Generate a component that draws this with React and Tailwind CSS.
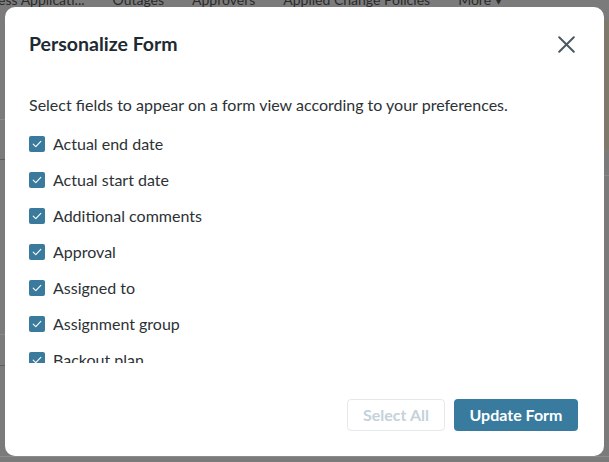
import React from "react";

const fields = [
  "Actual end date",
  "Actual start date",
  "Additional comments",
  "Approval",
  "Assigned to",
  "Assignment group",
  "Backout plan",
  "Business service",
];

const tabs = ["ess Applicati...", "Outages", "Approvers", "Applied Change Policies", "More ▾"];

function Check() {
  return (
    <span className="w-[16px] h-[16px] rounded-[2px] bg-[#3a7a9c] flex items-center justify-center shrink-0">
      <svg width="10" height="8" viewBox="0 0 10 8" fill="none">
        <path d="M1.2 4.2 L3.8 6.6 L8.8 1.4" stroke="white" strokeWidth="1.1" strokeLinecap="round" strokeLinejoin="round" />
      </svg>
    </span>
  );
}

export default function App() {
  return (
    <div
      className="relative w-[609px] h-[462px] overflow-hidden bg-[#7b7b7b]"
      style={{ fontFamily: "Lato, 'Noto Sans', sans-serif" }}
    >
      {/* background page behind overlay */}
      <div className="flex flex-col h-full">
        <div className="flex gap-[28px] ml-[-2px] mt-[-8px] h-[16px] text-[14px] leading-[16px] text-[#2a2a2a] whitespace-nowrap">
          {tabs.map((t) => (
            <span key={t}>{t}</span>
          ))}
        </div>
        <div className="flex-1 flex justify-between">
          <div className="w-[6px] flex flex-col">
            <div className="h-[111px]" />
            <div className="h-[40px] border-t border-[#8a8a8a]" />
            <div className="h-[175px] border-t border-[#5e5e5e]" />
            <div className="h-[31px] border-t border-[#8a8a8a]" />
            <div className="border-t border-[#5e5e5e]" />
          </div>
          <div className="w-[5px] flex flex-col">
            <div className="h-[12px]" />
            <div className="h-[130px] bg-[#7d7a6c]" />
            <div className="h-[25px]" />
            <div className="border-t border-[#8a8a8a]" />
          </div>
        </div>
        <div className="h-[6px] border-t border-[#8c8c8c]" />
      </div>

      {/* modal */}
      <div className="absolute left-[5px] top-[7px] w-[599px] h-[449px] bg-white rounded-[10px] flex flex-col">
        <div className="flex items-center justify-between h-[74px] pl-[24px] pr-[29px]">
          <h2 className="text-[19.5px] leading-[24px] font-bold text-[#1e2a32]">Personalize Form</h2>
          <svg width="17" height="17" viewBox="0 0 17 17" fill="none">
            <path d="M1.2 1.2 L15.8 15.8 M15.8 1.2 L1.2 15.8" stroke="#4a5a64" strokeWidth="2" strokeLinecap="round" />
          </svg>
        </div>
        <div className="pl-[24px] pr-[24px]">
          <p className="mt-[12px] text-[16px] leading-[24px] text-[#2c3236]">
            Select fields to appear on a form view according to your preferences.
          </p>
          <div className="mt-[9px] h-[237px] overflow-hidden flex flex-col">
            {fields.map((f) => (
              <label key={f} className="h-[36px] shrink-0 flex items-center gap-[8px] text-[16px] text-[#2c3236]">
                <Check />
                <span>{f}</span>
              </label>
            ))}
          </div>
        </div>
        <div className="mt-auto flex justify-end gap-[9px] pr-[26px] pb-[25px]">
          <button className="w-[98px] h-[32px] rounded-[4px] border border-[#e4e9ec] text-[16px] font-bold text-[#c4d2db] bg-white">
            Select All
          </button>
          <button className="w-[124px] h-[32px] rounded-[4px] bg-[#387b9e] text-[16px] font-bold text-white">
            Update Form
          </button>
        </div>
      </div>
    </div>
  );
}
